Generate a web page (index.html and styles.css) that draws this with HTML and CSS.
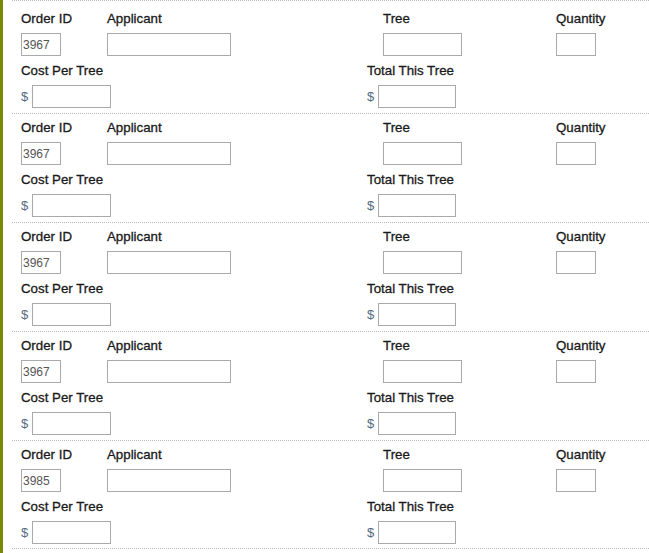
FILE: index.html
```html
<!DOCTYPE html>
<html lang="en">
<head>
  <meta charset="UTF-8">
  <title>Tree Orders</title>
  <link rel="stylesheet" href="styles.css">
</head>
<body>
  <div class="orders">
    <div class="order">
      <div class="row">
        <div class="field col-order"><label>Order ID</label><input class="w-small" type="text" value="3967"></div>
        <div class="field col-applicant"><label>Applicant</label><input class="w-wide" type="text"></div>
        <div class="field col-tree"><label>Tree</label><input class="w-mid" type="text"></div>
        <div class="field"><label>Quantity</label><input class="w-small" type="text"></div>
      </div>
      <div class="row">
        <div class="field col-cost"><label>Cost Per Tree</label><div class="money"><span>$</span><input class="w-mid" type="text"></div></div>
        <div class="field"><label>Total This Tree</label><div class="money"><span>$</span><input class="w-total" type="text"></div></div>
      </div>
    </div>

    <div class="order">
      <div class="row">
        <div class="field col-order"><label>Order ID</label><input class="w-small" type="text" value="3967"></div>
        <div class="field col-applicant"><label>Applicant</label><input class="w-wide" type="text"></div>
        <div class="field col-tree"><label>Tree</label><input class="w-mid" type="text"></div>
        <div class="field"><label>Quantity</label><input class="w-small" type="text"></div>
      </div>
      <div class="row">
        <div class="field col-cost"><label>Cost Per Tree</label><div class="money"><span>$</span><input class="w-mid" type="text"></div></div>
        <div class="field"><label>Total This Tree</label><div class="money"><span>$</span><input class="w-total" type="text"></div></div>
      </div>
    </div>

    <div class="order">
      <div class="row">
        <div class="field col-order"><label>Order ID</label><input class="w-small" type="text" value="3967"></div>
        <div class="field col-applicant"><label>Applicant</label><input class="w-wide" type="text"></div>
        <div class="field col-tree"><label>Tree</label><input class="w-mid" type="text"></div>
        <div class="field"><label>Quantity</label><input class="w-small" type="text"></div>
      </div>
      <div class="row">
        <div class="field col-cost"><label>Cost Per Tree</label><div class="money"><span>$</span><input class="w-mid" type="text"></div></div>
        <div class="field"><label>Total This Tree</label><div class="money"><span>$</span><input class="w-total" type="text"></div></div>
      </div>
    </div>

    <div class="order">
      <div class="row">
        <div class="field col-order"><label>Order ID</label><input class="w-small" type="text" value="3967"></div>
        <div class="field col-applicant"><label>Applicant</label><input class="w-wide" type="text"></div>
        <div class="field col-tree"><label>Tree</label><input class="w-mid" type="text"></div>
        <div class="field"><label>Quantity</label><input class="w-small" type="text"></div>
      </div>
      <div class="row">
        <div class="field col-cost"><label>Cost Per Tree</label><div class="money"><span>$</span><input class="w-mid" type="text"></div></div>
        <div class="field"><label>Total This Tree</label><div class="money"><span>$</span><input class="w-total" type="text"></div></div>
      </div>
    </div>

    <div class="order">
      <div class="row">
        <div class="field col-order"><label>Order ID</label><input class="w-small" type="text" value="3985"></div>
        <div class="field col-applicant"><label>Applicant</label><input class="w-wide" type="text"></div>
        <div class="field col-tree"><label>Tree</label><input class="w-mid" type="text"></div>
        <div class="field"><label>Quantity</label><input class="w-small" type="text"></div>
      </div>
      <div class="row">
        <div class="field col-cost"><label>Cost Per Tree</label><div class="money"><span>$</span><input class="w-mid" type="text"></div></div>
        <div class="field"><label>Total This Tree</label><div class="money"><span>$</span><input class="w-total" type="text"></div></div>
      </div>
    </div>
  </div>
</body>
</html>
```

FILE: styles.css
```css
body {
  margin: 0;
  font-family: "Liberation Sans", Arial, sans-serif;
  font-size: 13px;
  color: #1a1a1a;
  background: #fff;
}

.orders {
  border-left: 3px solid #7a8a00;
  padding-left: 9px;
  min-height: 553px;
  box-sizing: border-box;
}

.order {
  border-top: 1px dotted #bbb;
  padding: 6px 0 5px 9px;
}

.order:first-child {
  padding-top: 10px;
}

.order:last-child {
  border-bottom: 1px dotted #bbb;
  padding-bottom: 4px;
}

.row {
  display: flex;
}

.row + .row {
  margin-top: 7px;
}

.field label {
  display: block;
  font-size: 13.3px;
  line-height: 15px;
  margin-bottom: 7px;
  -webkit-text-stroke: 0.3px #1a1a1a;
}

.col-order { width: 86px; }
.col-applicant { width: 276px; }
.col-tree { width: 173px; }
.col-cost { width: 346px; }

input {
  display: block;
  box-sizing: border-box;
  height: 23px;
  margin: 0;
  padding: 0 1px;
  border: 1px solid #aaa;
  border-radius: 0;
  font-family: "Liberation Sans", Arial, sans-serif;
  font-size: 12px;
  color: #555;
  background: #fff;
}

.w-small { width: 40px; }
.w-wide { width: 124px; }
.w-mid { width: 79px; }
.w-total { width: 78px; }

.money {
  display: flex;
  align-items: center;
}

.money span {
  width: 11px;
  color: #566b80;
}
```
